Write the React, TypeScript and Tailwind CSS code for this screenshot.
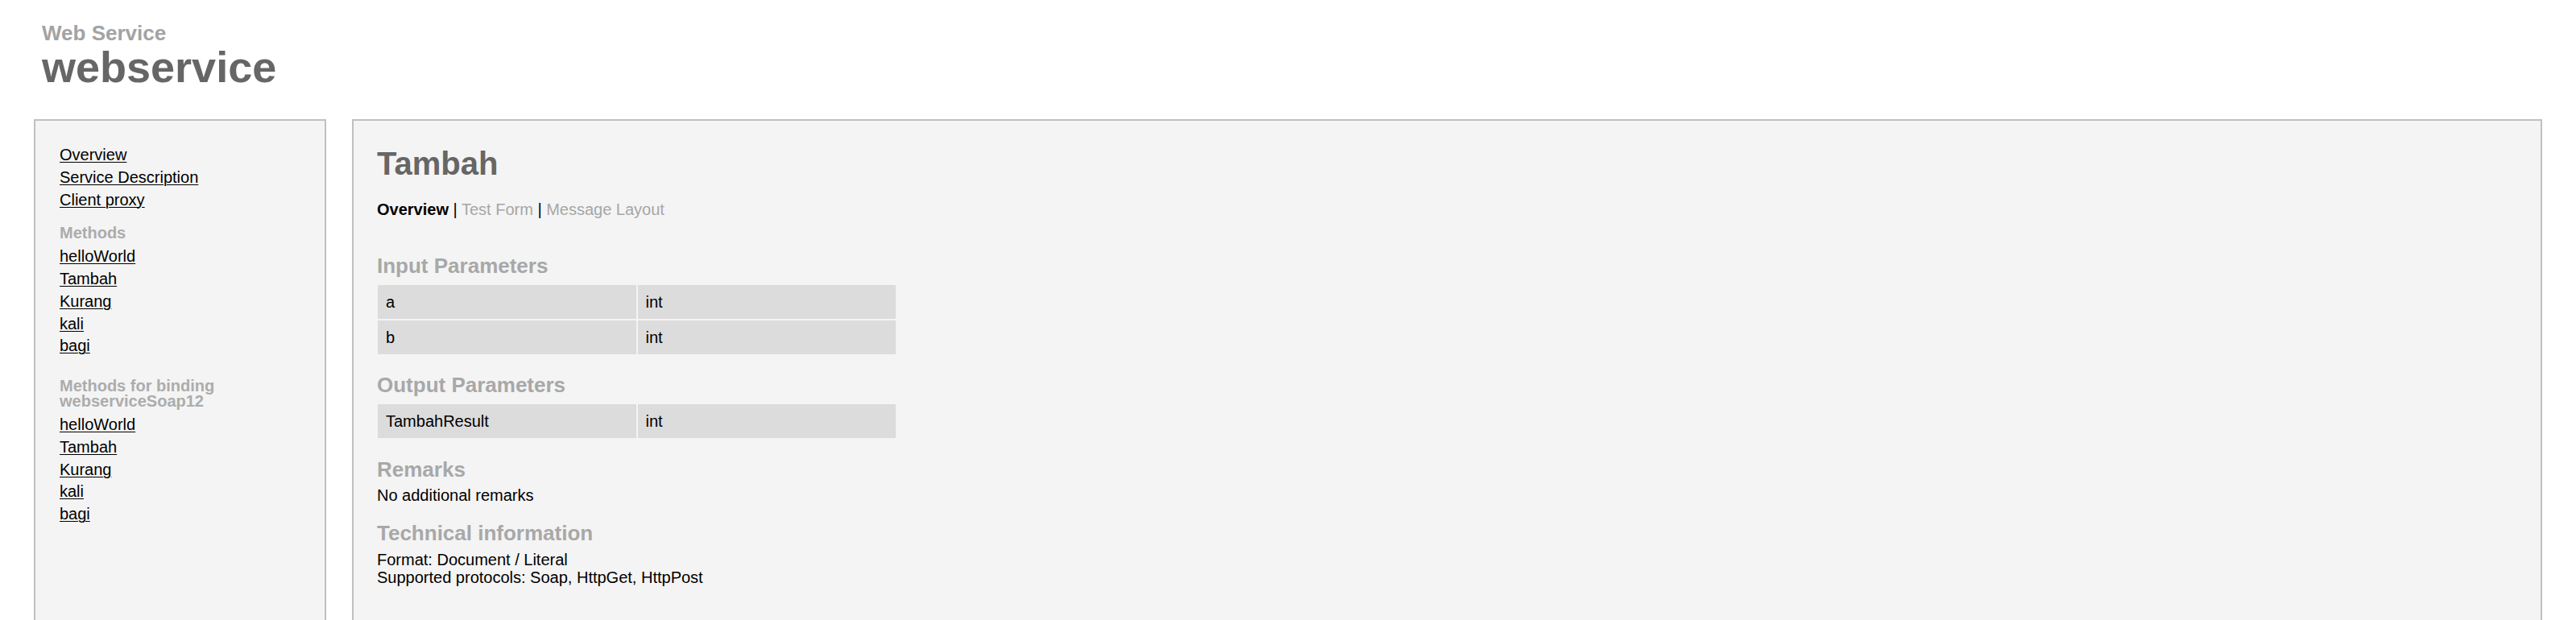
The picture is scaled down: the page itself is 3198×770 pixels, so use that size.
const font = "font-['Liberation_Sans',Arial,sans-serif]";

const mainLinks = ['Overview', 'Service Description', 'Client proxy'];
const methods = ['helloWorld', 'Tambah', 'Kurang', 'kali', 'bagi'];

const inputParams = [
  { name: 'a', type: 'int' },
  { name: 'b', type: 'int' },
];
const outputParams = [{ name: 'TambahResult', type: 'int' }];

function NavLink({ label }: { label: string }) {
  return (
    <div className="leading-[27.75px]">
      <a href="#" className="text-black underline underline-offset-2 decoration-1">
        {label}
      </a>
    </div>
  );
}

function ParamTable({ rows }: { rows: { name: string; type: string }[] }) {
  return (
    <table className="border-separate border-spacing-[2px] w-[647px] -ml-[1px]">
      <tbody>
        {rows.map((r) => (
          <tr key={r.name}>
            <td className="bg-[#dcdcdc] px-[10px] py-[10px] leading-[22px] w-1/2">{r.name}</td>
            <td className="bg-[#dcdcdc] px-[10px] py-[10px] leading-[22px] w-1/2">{r.type}</td>
          </tr>
        ))}
      </tbody>
    </table>
  );
}

export default function App() {
  return (
    <div className={`${font} bg-white min-h-[770px] text-[20px] text-black`}>
      {/* header */}
      <div className="pl-[52px] pt-[28px]">
        <div className="text-[26px] leading-none font-bold text-[#a3a3a3]">Web Service</div>
        <div className="text-[54px] leading-none font-bold text-[#666666] mt-[2px]">webservice</div>
      </div>

      <div className="flex gap-[32px] px-[42px] mt-[38px]">
        {/* sidebar */}
        <div className="w-[363px] shrink-0 bg-[#f4f4f4] border-2 border-[#c0c0c0] pl-[30px] pr-[20px] pt-[29px] h-[660px]">
          {mainLinks.map((l) => (
            <NavLink key={l} label={l} />
          ))}
          <div className="mt-[18px] mb-[6px] font-bold text-[#acacac] leading-[19px]">Methods</div>
          {methods.map((m) => (
            <NavLink key={'a' + m} label={m} />
          ))}
          <div className="mt-[26px] mb-[6px] font-bold text-[#acacac] leading-[19px]">
            Methods for binding webserviceSoap12
          </div>
          {methods.map((m) => (
            <NavLink key={'b' + m} label={m} />
          ))}
        </div>

        {/* main */}
        <div className="flex-1 bg-[#f4f4f4] border-2 border-[#c0c0c0] pl-[29px] pt-[33px] h-[660px]">
          <h1 className="text-[40px] leading-none font-bold text-[#666666]">Tambah</h1>
          <div className="mt-[26px] leading-[22px]">
            <span className="font-bold text-black">Overview</span> |{' '}
            <a href="#" className="text-[#a6a6a6]">Test Form</a> |{' '}
            <a href="#" className="text-[#a6a6a6]">Message Layout</a>
          </div>

          <h2 className="mt-[46px] text-[26px] leading-none font-bold text-[#a8a8a8]">Input Parameters</h2>
          <div className="mt-[9px]">
            <ParamTable rows={inputParams} />
          </div>

          <h2 className="mt-[23px] text-[26px] leading-none font-bold text-[#a8a8a8]">Output Parameters</h2>
          <div className="mt-[9px]">
            <ParamTable rows={outputParams} />
          </div>

          <h2 className="mt-[24px] text-[26px] leading-none font-bold text-[#a8a8a8]">Remarks</h2>
          <p className="mt-[8px] leading-[22px]">No additional remarks</p>

          <h2 className="mt-[23px] text-[26px] leading-none font-bold text-[#a8a8a8]">Technical information</h2>
          <div className="mt-[9px] leading-[22px]">
            <div>Format: Document / Literal</div>
            <div>Supported protocols: Soap, HttpGet, HttpPost</div>
          </div>
        </div>
      </div>
    </div>
  );
}
